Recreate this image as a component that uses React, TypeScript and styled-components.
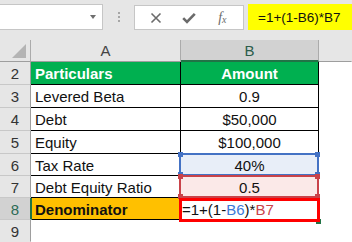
import React from "react";
import styled, { createGlobalStyle } from "styled-components";

const GlobalStyle = createGlobalStyle`
  html, body {
    margin: 0;
    padding: 0;
    background: #ffffff;
  }
  body {
    font-family: "Liberation Sans", Arial, sans-serif;
  }
`;

const ROW_HEIGHTS = [22, 23, 23, 23, 23, 22, 22, 22, 22];

type Row = {
  num: number;
  label: string;
  value: React.ReactNode;
};

const rows: Row[] = [
  { num: 3, label: "Levered Beta", value: "0.9" },
  { num: 4, label: "Debt", value: "$50,000" },
  { num: 5, label: "Equity", value: "$100,000" },
];

export default function App() {
  return (
    <Page>
      <GlobalStyle />
      <Toolbar>
        <NameBox>
          <DropArrow />
        </NameBox>
        <Grip>
          <Dot />
          <Dot />
          <Dot />
        </Grip>
        <FxBox>
          <ToolButton>
            <svg width="12" height="12" viewBox="0 0 12 12">
              <path d="M1.5 1.5 L10.5 10.5 M10.5 1.5 L1.5 10.5" stroke="#6b6b6b" strokeWidth="1.6" fill="none" />
            </svg>
          </ToolButton>
          <ToolButton>
            <svg width="14" height="12" viewBox="0 0 14 12">
              <path d="M1.2 6.2 L5 10 L12.8 1.8" stroke="#6b6b6b" strokeWidth="2.6" fill="none" />
            </svg>
          </ToolButton>
          <ToolButton>
            <FxText>
              f<sub>x</sub>
            </FxText>
          </ToolButton>
        </FxBox>
        <FormulaBox>=1+(1-B6)*B7</FormulaBox>
      </Toolbar>

      <Sheet>
        <Corner>
          <CornerTriangle />
        </Corner>
        <ColHeader>A</ColHeader>
        <ColHeader $active>B</ColHeader>
        <ColHeader $blank />

        <RowHeader>2</RowHeader>
        <Cell $fill="#00b050" $bold $color="#ffffff">Particulars</Cell>
        <Cell $fill="#00b050" $bold $color="#ffffff" $center>Amount</Cell>
        <Blank />

        {rows.map((r) => (
          <React.Fragment key={r.num}>
            <RowHeader>{r.num}</RowHeader>
            <Cell>{r.label}</Cell>
            <Cell $center>{r.value}</Cell>
            <Blank />
          </React.Fragment>
        ))}

        <RowHeader>6</RowHeader>
        <Cell>Tax Rate</Cell>
        <Cell $center $fill="#e8eef8">
          <RefFrame $tone="#4472c4">
            <Handle $tone="#4472c4" $v="top" $h="left" />
            <Handle $tone="#4472c4" $v="top" $h="right" />
            <Handle $tone="#4472c4" $v="bottom" $h="left" />
            <Handle $tone="#4472c4" $v="bottom" $h="right" />
          </RefFrame>
          <CellText>40%</CellText>
        </Cell>
        <Blank />

        <RowHeader>7</RowHeader>
        <Cell>Debt Equity Ratio</Cell>
        <Cell $center $fill="#fbe9e8">
          <RefFrame $tone="#c9434a">
            <Handle $tone="#c9434a" $v="top" $h="left" />
            <Handle $tone="#c9434a" $v="top" $h="right" />
            <Handle $tone="#c9434a" $v="bottom" $h="left" />
            <Handle $tone="#c9434a" $v="bottom" $h="right" />
          </RefFrame>
          <CellText>0.5</CellText>
        </Cell>
        <Blank />

        <RowHeader $active>8</RowHeader>
        <Cell $fill="#ffc000" $bold>Denominator</Cell>
        <Cell $edit>
          <FillHandle />
          <EditFrame />
          <CellText>
            =1+(1-<Ref $tone="#3c78d8">B6</Ref>)*<Ref $tone="#c9434a">B7</Ref>
          </CellText>
        </Cell>
        <Blank />

        <RowHeader $last>9</RowHeader>
        <Empty />
        <Empty />
        <Blank />
      </Sheet>
    </Page>
  );
}

const Page = styled.div`
  width: 352px;
  height: 242px;
  overflow: hidden;
  background: #ffffff;
  display: flex;
  flex-direction: column;
`;

const Toolbar = styled.div`
  height: 40px;
  flex-shrink: 0;
  background: #e6e6e6;
  display: flex;
  align-items: flex-start;
  padding-top: 4px;
  box-sizing: border-box;
`;

const NameBox = styled.div`
  position: relative;
  width: 103px;
  height: 26px;
  box-sizing: border-box;
  background: #ffffff;
  border: 1px solid #c6c6c6;
  border-left: none;
`;

const DropArrow = styled.div`
  position: absolute;
  left: 90px;
  top: 10px;
  width: 0;
  height: 0;
  border-left: 3.5px solid transparent;
  border-right: 3.5px solid transparent;
  border-top: 4px solid #6e6e6e;
`;

const Grip = styled.div`
  width: 31px;
  height: 26px;
  display: flex;
  flex-direction: column;
  align-items: center;
  justify-content: center;
  gap: 2px;
`;

const Dot = styled.span`
  width: 2px;
  height: 2px;
  background: #a6a6a6;
`;

const FxBox = styled.div`
  width: 110px;
  height: 25px;
  margin-top: 1px;
  box-sizing: border-box;
  background: #ffffff;
  border: 1px solid #c6c6c6;
  display: flex;
  align-items: center;
  justify-content: space-around;
  padding: 0 4px;
`;

const ToolButton = styled.div`
  width: 28px;
  height: 22px;
  display: flex;
  align-items: center;
  justify-content: center;
`;

const FxText = styled.span`
  font-family: "Liberation Serif", "Times New Roman", serif;
  font-style: italic;
  font-size: 14px;
  color: #6b6b6b;
  line-height: 1;
  sub {
    font-size: 10px;
    vertical-align: -1px;
  }
`;

const FormulaBox = styled.div`
  margin-left: 4px;
  flex: 1;
  height: 26px;
  background: #ffff00;
  font-size: 13.5px;
  color: #111;
  display: flex;
  align-items: center;
  padding-left: 10px;
  box-sizing: border-box;
`;

const Sheet = styled.div`
  display: grid;
  grid-template-columns: 31px 150px 138px 1fr;
  grid-template-rows: ${ROW_HEIGHTS.map((h) => `${h}px`).join(" ")};
  font-size: 15px;
  color: #111;
`;

const Corner = styled.div`
  position: relative;
  background: #e6e6e6;
  border-right: 1px solid #ababab;
  border-bottom: 1px solid #9e9e9e;
`;

const CornerTriangle = styled.div`
  position: absolute;
  right: 4px;
  bottom: 3px;
  width: 0;
  height: 0;
  border-left: 14px solid transparent;
  border-bottom: 14px solid #b4b4b4;
`;

const ColHeader = styled.div<{ $active?: boolean; $blank?: boolean }>`
  background: ${(p) => (p.$active ? "#d2d2d2" : "#e6e6e6")};
  border-right: 1px solid ${(p) => (p.$blank ? "transparent" : "#ababab")};
  border-bottom: ${(p) => (p.$active ? "2px solid #217346" : "1px solid #9e9e9e")};
  color: ${(p) => (p.$active ? "#2b5d4b" : "#444")};
  display: flex;
  align-items: center;
  justify-content: center;
  padding-top: ${(p) => (p.$active ? "1px" : "0")};
  box-sizing: border-box;
`;

const RowHeader = styled.div<{ $active?: boolean; $last?: boolean }>`
  background: ${(p) => (p.$active ? "#d2d2d2" : "#e6e6e6")};
  border-right: ${(p) => (p.$active ? "2px solid #217346" : "1px solid #9e9e9e")};
  border-bottom: 1px solid ${(p) => (p.$last ? "transparent" : "#c8c8c8")};
  color: ${(p) => (p.$active ? "#2b6b55" : "#333")};
  display: flex;
  align-items: center;
  justify-content: center;
  padding-top: 1px;
  box-sizing: border-box;
  margin-right: ${(p) => (p.$active ? "-1px" : "0")};
  position: relative;
  z-index: 1;
`;

const Cell = styled.div<{
  $fill?: string;
  $bold?: boolean;
  $color?: string;
  $center?: boolean;
  $edit?: boolean;
}>`
  position: relative;
  background: ${(p) => p.$fill ?? "#ffffff"};
  color: ${(p) => p.$color ?? "#111"};
  font-weight: ${(p) => (p.$bold ? 700 : 400)};
  border-right: 1px solid #000;
  border-bottom: 1px solid ${(p) => (p.$edit ? "transparent" : "#000")};
  display: flex;
  align-items: center;
  justify-content: ${(p) => (p.$center ? "center" : "flex-start")};
  padding: 1px 0 0 ${(p) => (p.$center ? "0" : p.$edit ? "1px" : "4px")};
  box-sizing: border-box;
  white-space: nowrap;
`;

const CellText = styled.span`
  position: relative;
  z-index: 3;
`;

const Ref = styled.span<{ $tone: string }>`
  color: ${(p) => p.$tone};
`;

const Blank = styled.div`
  background: #ffffff;
`;

const Empty = styled.div`
  background: #ffffff;
`;

const RefFrame = styled.div<{ $tone: string }>`
  position: absolute;
  inset: -1px -1px -1px -2px;
  border: 2px solid ${(p) => p.$tone};
  z-index: 2;
  pointer-events: none;
`;

const Handle = styled.span<{ $tone: string; $v: "top" | "bottom"; $h: "left" | "right" }>`
  position: absolute;
  width: 5px;
  height: 5px;
  background: ${(p) => p.$tone};
  ${(p) => p.$v}: -3px;
  ${(p) => p.$h}: -3px;
`;

const EditFrame = styled.div`
  position: absolute;
  inset: 0 -2px -3px -2px;
  border: 3px solid #ff0000;
  z-index: 4;
`;

const FillHandle = styled.span`
  position: absolute;
  right: -3px;
  bottom: -5px;
  width: 5px;
  height: 5px;
  background: #217346;
  z-index: 3;
`;
